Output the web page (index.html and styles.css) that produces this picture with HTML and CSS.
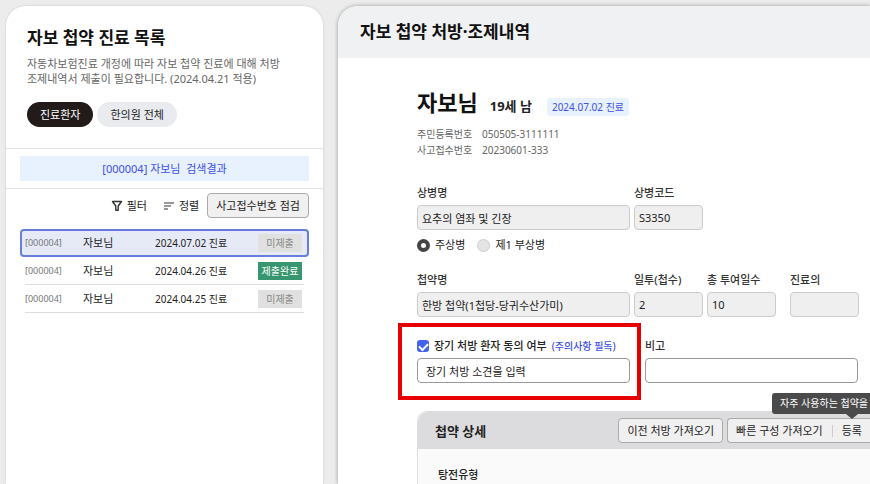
FILE: index.html
```html
<!DOCTYPE html>
<html lang="ko">
<head>
    <meta charset="UTF-8">
    <meta name="viewport" content="width=device-width, initial-scale=1.0">
    <title>자보 첩약 처방·조제내역</title>
    <link rel="stylesheet" href="styles.css">
</head>
<body>
    <!-- Patient list -->
    <aside class="panel sidebar">
        <header class="sidebar-head">
            <h1 class="panel-title">자보 첩약 진료 목록</h1>
            <p class="desc">자동차보험진료 개정에 따라 자보 첩약 진료에 대해 처방<br>조제내역서 제출이 필요합니다. (2024.04.21 적용)</p>
            <div class="pills">
                <button class="pill active" type="button">진료환자</button>
                <button class="pill" type="button">한의원 전체</button>
            </div>
        </header>

        <div class="result-wrap">
            <p class="result">[000004] 자보님&nbsp; 검색결과</p>
        </div>

        <div class="toolbar">
            <button class="tool" type="button">
                <svg width="12" height="12" viewBox="0 0 12 12" fill="none" stroke="#333" stroke-width="1.4" stroke-linejoin="round"><path d="M1.5 1.5h9L7.2 6v4.2H4.8V6z"/></svg>
                필터
            </button>
            <button class="tool" type="button">
                <svg width="12" height="12" viewBox="0 0 12 12" fill="none" stroke="#333" stroke-width="1.2"><path d="M1 3h10M1 6h7M1 9h4"/></svg>
                정렬
            </button>
            <button class="btn" type="button">사고접수번호 점검</button>
        </div>

        <table class="visits">
            <tbody>
                <tr class="selected">
                    <td class="no">[000004]</td>
                    <td class="name">자보님</td>
                    <td class="date">2024.07.02 진료</td>
                    <td><span class="status">미제출</span></td>
                </tr>
                <tr>
                    <td class="no">[000004]</td>
                    <td class="name">자보님</td>
                    <td class="date">2024.04.26 진료</td>
                    <td><span class="status done">제출완료</span></td>
                </tr>
                <tr>
                    <td class="no">[000004]</td>
                    <td class="name">자보님</td>
                    <td class="date">2024.04.25 진료</td>
                    <td><span class="status">미제출</span></td>
                </tr>
            </tbody>
        </table>
    </aside>

    <!-- Prescription -->
    <main class="panel main">
        <header class="main-head">
            <h2 class="panel-title">자보 첩약 처방·조제내역</h2>
        </header>

        <div class="content">
            <div class="patient">
                <h3 class="patient-name">자보님</h3>
                <span class="patient-age">19세 남</span>
                <span class="visit-date">2024.07.02 진료</span>
            </div>
            <dl class="ids">
                <dt>주민등록번호</dt>
                <dd>050505-3111111</dd>
                <dt>사고접수번호</dt>
                <dd>20230601-333</dd>
            </dl>

            <div class="row">
                <div class="field wide">
                    <label for="disease">상병명</label>
                    <input id="disease" type="text" value="요추의 염좌 및 긴장" readonly>
                </div>
                <div class="field">
                    <label for="code">상병코드</label>
                    <input id="code" type="text" value="S3350" readonly>
                </div>
            </div>
            <div class="radios">
                <label><input type="radio" name="kind" checked>주상병</label>
                <label><input type="radio" name="kind">제1 부상병</label>
            </div>

            <div class="row">
                <div class="field wide">
                    <label for="herb">첩약명</label>
                    <input id="herb" type="text" value="한방 첩약(1첩당-당귀수산가미)" readonly>
                </div>
                <div class="field">
                    <label for="dose">일투(첩수)</label>
                    <input id="dose" type="text" value="2" readonly>
                </div>
                <div class="field">
                    <label for="days">총 투여일수</label>
                    <input id="days" type="text" value="10" readonly>
                </div>
                <div class="field doctor">
                    <label for="doctor">진료의</label>
                    <input id="doctor" type="text" readonly>
                </div>
            </div>

            <div class="row notes">
                <div class="field wide consent">
                    <div class="consent-label">
                        <input id="agree" type="checkbox" checked>
                        <label for="agree">장기 처방 환자 동의 여부</label>
                        <a href="#notice">(주의사항 필독)</a>
                    </div>
                    <input type="text" value="장기 처방 소견을 입력" aria-label="장기 처방 소견">
                </div>
                <div class="field wide">
                    <label for="memo">비고</label>
                    <input id="memo" type="text">
                </div>
            </div>

            <section class="detail">
                <header class="detail-head">
                    <h4>첩약 상세</h4>
                    <button class="btn" type="button">이전 처방 가져오기</button>
                    <div class="btn btn-split">
                        <button type="button">빠른 구성 가져오기</button>
                        <button class="register" type="button">등록</button>
                        <div class="tooltip" role="tooltip">자주 사용하는 첩약을</div>
                    </div>
                </header>
                <div class="detail-body">
                    <h5>탕전유형</h5>
                </div>
            </section>
        </div>
    </main>
</body>
</html>
```

FILE: styles.css
```css
* {
    margin: 0;
    padding: 0;
    box-sizing: border-box;
}

body {
    display: flex;
    gap: 15px;
    height: 100vh;
    padding: 6px 0 0 6px;
    overflow: hidden;
    background: #ececec;
    color: #222;
    font-family: "Noto Sans", "Noto Sans CJK KR", sans-serif;
    font-size: 11px;
    line-height: 16px;
    white-space: nowrap;
}

button,
input {
    font: inherit;
    color: inherit;
}

button {
    border: none;
    background: none;
    cursor: pointer;
}

.panel {
    background: #fff;
    overflow: hidden;
}

.panel-title {
    font-size: 17px;
    font-weight: 700;
    line-height: 24px;
    color: #111;
}

.btn {
    height: 25px;
    padding: 0 8px;
    border: 1px solid #aaa;
    border-radius: 4px;
    background: #f0f0f0;
}

/* Sidebar */
.sidebar {
    flex: 0 0 317px;
    border-radius: 20px 20px 0 0;
    box-shadow: 0 0 3px rgba(0, 0, 0, 0.12);
}

.sidebar-head {
    padding: 20px 21px 21px;
    border-bottom: 1px solid #e2e2e2;
}

.desc {
    margin-top: 6px;
    line-height: 15px;
    color: #666;
}

.pills {
    display: flex;
    gap: 4px;
    margin-top: 16px;
}

.pill {
    height: 25px;
    padding: 0 13px;
    border-radius: 13px;
    background: #e9ebef;
}

.pill.active {
    background: #231a1a;
    color: #fff;
}

.result-wrap {
    padding: 7px 14px;
    border-bottom: 1px solid #e2e2e2;
}

.result {
    background: #e8f1fe;
    color: #3d50e8;
    line-height: 25px;
    text-align: center;
}

.toolbar {
    display: flex;
    justify-content: flex-end;
    gap: 4px;
    padding: 4px 14px 11px;
}

.tool {
    display: flex;
    align-items: center;
    gap: 4px;
    padding: 0 4px 0 8px;
}

/* Visit list */
.visits,
.visits tbody {
    display: block;
}

.visits {
    margin: 0 14px;
}

.visits tr {
    display: flex;
    align-items: center;
    height: 28px;
    margin: 0 5px;
    border-bottom: 1px solid #ddd;
}

.visits tr.selected {
    margin: 0;
    padding: 0 3px;
    border: 2px solid #667fdc;
    border-radius: 4px;
    background: #e6eaf7;
}

.visits td {
    flex: none;
}

.visits .no {
    width: 58px;
    font-size: 9px;
    color: #777;
}

.visits .name {
    flex: 1;
}

.visits .date {
    width: 103px;
    font-size: 10px;
}

.status {
    display: block;
    width: 44px;
    margin-right: 2px;
    background: #e0e0e0;
    color: #888;
    font-size: 10px;
    line-height: 18px;
    text-align: center;
}

.status.done {
    background: #37966f;
    color: #fff;
}

/* Main panel */
.main {
    flex: 1;
    min-width: 0;
    border-radius: 20px 0 0 0;
    box-shadow: 0 0 4px rgba(0, 0, 0, 0.35);
}

.main-head {
    padding: 14px 22px;
    background: #f0f1f3;
}

.content {
    padding: 28px 0 0 79px;
}

.patient {
    display: flex;
    align-items: baseline;
}

.patient-name {
    font-size: 22px;
    font-weight: 700;
    line-height: 32px;
    color: #111;
}

.patient-age {
    margin-left: 12px;
    font-size: 13px;
    font-weight: 700;
}

.visit-date {
    margin-left: 15px;
    padding: 0 5px;
    border-radius: 3px;
    background: #e8f1fe;
    color: #3d50e8;
    font-size: 10px;
    line-height: 18px;
}

.ids {
    display: grid;
    grid-template-columns: 58px 1fr;
    gap: 0 7px;
    margin: 8px 0 27px;
    color: #666;
    font-size: 10px;
}

/* Form */
.row {
    display: flex;
    gap: 4px;
}

.field {
    display: flex;
    flex-direction: column;
    gap: 4px;
    width: 69px;
}

.field.wide {
    width: 213px;
}

.field.doctor {
    margin-left: 10px;
}

.field > label {
    color: #333;
    font-weight: 500;
}

.field input[type="text"] {
    width: 100%;
    height: 25px;
    padding: 0 8px;
    border: 1px solid #999;
    border-radius: 4px;
    background: #fff;
}

.field input[readonly] {
    padding: 0 4px;
    border-color: #ccc;
    background: #efefef;
}

.radios {
    display: flex;
    gap: 12px;
    margin: 7px 0 19px;
}

.radios label {
    display: flex;
    align-items: center;
    gap: 5px;
}

.radios input {
    appearance: none;
    width: 13px;
    height: 13px;
    border: 1px solid #ccc;
    border-radius: 50%;
    background: #e4e4e4;
}

.radios input:checked {
    border: 4px solid #444;
    background: #fff;
}

.notes {
    gap: 15px;
    margin-top: 21px;
}

.consent {
    position: relative;
}

/* Highlight frame round the consent field */
.consent::after {
    content: '';
    position: absolute;
    inset: -15px -11px -17px -19px;
    border: 4px solid #e60000;
    pointer-events: none;
}

.consent-label {
    display: flex;
    align-items: center;
    gap: 5px;
    font-weight: 500;
}

.consent-label input {
    appearance: none;
    width: 12px;
    height: 12px;
    border-radius: 3px;
    background: #4263eb;
}

.consent-label input::after {
    content: '';
    display: block;
    width: 7px;
    height: 4px;
    margin: 3px 2px;
    border: solid #fff;
    border-width: 0 0 2px 2px;
    transform: rotate(-45deg);
}

.consent-label a {
    color: #3d50e8;
    font-size: 10px;
    text-decoration: none;
}

/* Detail card */
.detail {
    margin-top: 28px;
    height: 300px;
    border: 1px solid #ddd;
    border-right: none;
    border-radius: 10px 0 0 0;
    background: #fafafa;
}

.detail-head {
    display: flex;
    align-items: center;
    gap: 4px;
    height: 37px;
    padding-left: 17px;
    border-radius: 10px 0 0 0;
    background: #dcdcde;
}

.detail-head h4 {
    flex: 1;
    font-size: 13px;
    font-weight: 700;
}

.btn-split {
    position: relative;
    display: flex;
    align-items: center;
    border-right: none;
    border-radius: 4px 0 0 4px;
}

.register {
    margin-left: 9px;
    padding-left: 9px;
    border-left: 1px solid #ccc;
    line-height: 12px;
}

.tooltip {
    position: absolute;
    left: 44px;
    bottom: 28px;
    padding: 0 20px 0 8px;
    border-radius: 3px;
    background: #4a4a4a;
    color: #fff;
    font-size: 10px;
    line-height: 21px;
}

.tooltip::after {
    content: '';
    position: absolute;
    top: 100%;
    left: 74px;
    border: 6px solid transparent;
    border-top: 5px solid #4a4a4a;
    border-bottom: none;
}

.detail-body {
    padding: 18px 20px;
}

.detail-body h5 {
    font-size: 11px;
    font-weight: 500;
}
```
